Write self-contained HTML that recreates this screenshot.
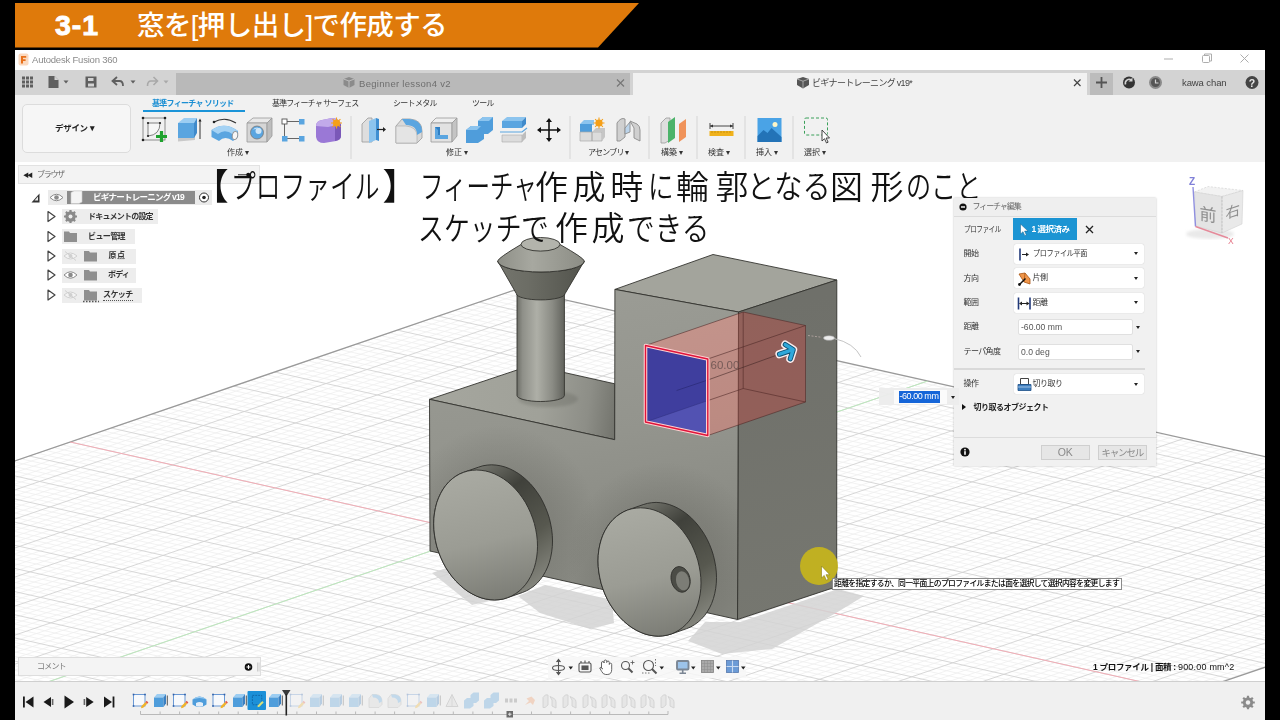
<!DOCTYPE html>
<html lang="ja"><head><meta charset="utf-8"><title>Fusion 360</title>
<style>
html,body{margin:0;padding:0;background:#000;}
body{width:1280px;height:720px;overflow:hidden;position:relative;font-family:"Liberation Sans","Noto Sans CJK JP",sans-serif;color:#222;}
.abs{position:absolute;}
#win{position:absolute;left:15px;top:50px;width:1250px;height:670px;background:#f0f0f0;overflow:hidden;filter:blur(0.5px);}
#titlebar{position:absolute;left:0;top:0;width:1250px;height:20px;background:#fff;}
#tabbar{position:absolute;left:0;top:19.5px;width:1250px;height:25.5px;background:#d3d3d3;}
#toolbar{position:absolute;left:0;top:45px;width:1250px;height:67px;background:#f1f1f1;}
#canvas{position:absolute;left:0;top:112px;width:1250px;height:519px;background:#fff;overflow:hidden;}
#timeline{position:absolute;left:0;top:631px;width:1250px;height:39px;background:#f0f0f0;border-top:1px solid #cfcfcf;}
.t{position:absolute;white-space:nowrap;line-height:1;}
.lbl{position:absolute;white-space:nowrap;line-height:1;font-size:8px;color:#333;}
</style></head>
<body>
<!-- top banner -->
<svg class="abs" style="left:0;top:0" width="1280" height="50" viewBox="0 0 1280 50">
<polygon points="15,3 639,3 598,47.5 15,47.5" fill="#df7a0b"/>
</svg>
<div class="t" style="left:55px;top:11px;font-size:28.5px;font-weight:bold;color:#fff;letter-spacing:1px;-webkit-text-stroke:0.9px #fff;">3-1</div>
<div class="t" style="left:137px;top:11.5px;font-size:27.5px;color:#fff;font-weight:500;letter-spacing:-0.6px;">窓を[押し出し]で作成する</div>

<div id="win">
<div id="titlebar">
<svg class="abs" style="left:3px;top:3px" width="12" height="14" viewBox="0 0 12 14"><rect x="0.5" y="0.5" width="10" height="12" rx="2" fill="#fbd9bf"/><path d="M3 10.5V3h5.2v1.8H5v1.5h2.6v1.7H5v2.5z" fill="#e8701a"/></svg>
<div class="t" style="left:17px;top:5px;font-size:9.5px;color:#8a8a8a;letter-spacing:-0.2px;">Autodesk Fusion 360</div>
<svg class="abs" style="left:1140px;top:0" width="110" height="20" viewBox="0 0 110 20" fill="none" stroke="#adadad" stroke-width="1">
<path d="M9 9h9"/><rect x="47.5" y="5.500" width="7" height="7" rx="1"/><path d="M49.500 5.500v-1.500h7v7h-2" /><path d="M85.500 4.500l8 8m0-8l-8 8"/></svg>
</div>
<div id="tabbar">
<div class="abs" style="left:161px;top:3px;width:454px;height:22px;background:#b9b9b9;"></div>
<div class="abs" style="left:618px;top:3px;width:454px;height:23px;background:#f1f1f1;"></div>
<div class="abs" style="left:1075px;top:3px;width:23px;height:22px;background:#bcbcbc;"></div>
</div>
<div id="toolbar"></div>
<!-- tab bar + toolbar text -->
<div class="t" style="left:344px;top:28.5px;font-size:9.5px;color:#6e6e6e;letter-spacing:0.300px;">Beginner lesson4 v2</div>
<div class="t" style="left:797px;top:28.5px;font-size:9px;color:#444;letter-spacing:-0.7px;">ビギナートレーニング v19*</div>
<div class="t" style="left:1167px;top:27.5px;font-size:9.5px;color:#444;letter-spacing:-0.1px;">kawa chan</div>
<div class="abs" style="left:7px;top:54px;width:107px;height:47px;border:1px solid #dcdcdc;border-radius:5px;background:#f6f6f6;"></div>
<div class="t" style="left:40px;top:74px;font-size:8.5px;font-weight:bold;color:#222;letter-spacing:-0.3px;">デザイン ▾</div>
<div class="t" style="left:137px;top:50px;font-size:8px;font-weight:bold;color:#1c8fd3;letter-spacing:-0.7px;">基準フィーチャ ソリッド</div>
<div class="abs" style="left:128px;top:60px;width:102px;height:2px;background:#1b94d8;"></div>
<div class="t" style="left:257px;top:50px;font-size:8px;color:#333;letter-spacing:-0.85px;">基準フィーチャ サーフェス</div>
<div class="t" style="left:378px;top:50px;font-size:8px;color:#333;letter-spacing:-0.7px;">シートメタル</div>
<div class="t" style="left:457px;top:50px;font-size:8px;color:#333;letter-spacing:-0.7px;">ツール</div>
<div class="lbl" style="left:212px;top:99px;">作成 ▾</div>
<div class="lbl" style="left:431px;top:99px;">修正 ▾</div>
<div class="lbl" style="left:573px;top:99px;letter-spacing:-0.8px;">アセンブリ ▾</div>
<div class="lbl" style="left:646px;top:99px;">構築 ▾</div>
<div class="lbl" style="left:693px;top:99px;">検査 ▾</div>
<div class="lbl" style="left:741px;top:99px;">挿入 ▾</div>
<div class="lbl" style="left:789px;top:99px;">選択 ▾</div>
<!-- chrome icons (page coordinates) -->
<svg class="abs" style="left:0;top:0" width="1250" height="115" viewBox="15 50 1250 115">
<!-- quick access -->
<g fill="#5f5f5f">
<rect x="22" y="76.500" width="3" height="3"/><rect x="26" y="76.500" width="3" height="3"/><rect x="30" y="76.500" width="3" height="3"/>
<rect x="22" y="80.500" width="3" height="3"/><rect x="26" y="80.500" width="3" height="3"/><rect x="30" y="80.500" width="3" height="3"/>
<rect x="22" y="84.500" width="3" height="3"/><rect x="26" y="84.500" width="3" height="3"/><rect x="30" y="84.500" width="3" height="3"/>
<path d="M48.500 76h6l4 4v8h-10z"/><path d="M54.500 76v4h4" fill="#d3d3d3"/>
<path d="M63.500 80.500h5l-2.500 3z"/>
<path d="M85.500 76.500h11v11h-11z M88 78h5.500v3h-5.500z M88 83.500h6v3h-6z" fill-rule="evenodd"/>
<path d="M130.500 80.500h5l-2.500 3z"/>
</g>
<path d="M117 77l-4.500 4 4.500 4M113 81h6.500q3.500 0 3.500 5" fill="none" stroke="#5f5f5f" stroke-width="1.800"/>
<path d="M153.500 77l4 4-4 4M157 81h-6q-3.500 0-3.500 5" fill="none" stroke="#a9a9a9" stroke-width="1.600"/>
<path d="M163.500 80.500h5l-2.500 3z" fill="#a9a9a9"/>
<!-- tab icons -->
<path d="M343.500 79l5.500-2 5.500 2v6l-5.500 3-5.500-3z" fill="#8b8b8b"/><path d="M343.500 79l5.500 2 5.500-2M349 81v7" stroke="#c9c9c9" stroke-width="0.800" fill="none"/>
<path d="M617 79.500l7 7m0-7l-7 7" stroke="#777" stroke-width="1.200"/>
<path d="M797 79l6-2 6 2v6l-6 3.500-6-3.500z" fill="#555"/><path d="M797 79l6 2.200 6-2.200M803 81.200v7" stroke="#bbb" stroke-width="0.800" fill="none"/>
<path d="M1074 79.500l6.500 6.500m0-6.500l-6.500 6.500" stroke="#444" stroke-width="1.200"/>
<path d="M1096 82.500h11M1101.500 77v11" stroke="#555" stroke-width="1.800"/>
<circle cx="1129" cy="82.500" r="6" fill="#333"/><path d="M1125.500 84.500a4 4 0 0 1 6-4.500" stroke="#d3d3d3" stroke-width="1.600" fill="none"/><path d="M1132.500 77.500v4h-4z" fill="#d3d3d3"/>
<circle cx="1155.500" cy="82.500" r="6.500" fill="#8a8a8a"/><circle cx="1155.500" cy="82.500" r="4.500" fill="#555"/><path d="M1155.500 79.500v3.500h3" stroke="#d3d3d3" stroke-width="1.200" fill="none"/>
<circle cx="1252" cy="82.500" r="6.500" fill="#444"/><text x="1252" y="86.500" font-size="10.500" font-weight="bold" fill="#e6e6e6" text-anchor="middle" font-family="Liberation Sans, sans-serif">?</text>
<!-- separators -->
<g stroke="#dadada" stroke-width="1.200"><path d="M351 116v43M570 116v43M649 116v43M697 116v43M745 116v43M793 116v43"/></g>

<!-- 1 sketch -->
<g>
<rect x="143" y="118" width="22" height="22" fill="none" stroke="#777" stroke-width="0.800"/>
<path d="M148 123h12q0 12-12 13z" fill="#f7f7f7" stroke="#666" stroke-width="0.800"/>
<g fill="#222"><circle cx="143" cy="118" r="1.300"/><circle cx="165" cy="118" r="1.300"/><circle cx="143" cy="140" r="1.300"/><circle cx="148" cy="123" r="1.100"/><circle cx="160" cy="123" r="1.100"/><circle cx="148" cy="136" r="1.100"/></g>
<path d="M156 136.500h11M161.500 131v11" stroke="#1fa22e" stroke-width="3.200"/>
</g>
<!-- 2 extrude -->
<g>
<path d="M178 137l17-1v4l-17 1.500z" fill="#c9c9c9"/>
<path d="M178 123l6-5h13l-3 5z" fill="#9ccdf2"/><path d="M178 123h16v15h-16z" fill="#5aa5e0"/><path d="M194 123l3-5v15l-3 5z" fill="#3f8acb"/>
<path d="M200 120v19" stroke="#333" stroke-width="1"/><path d="M198.500 121.500l1.500-3 1.500 3z" fill="#222"/>
</g>
<!-- 3 revolve -->
<g>
<path d="M214 122q11-6 22 1" fill="none" stroke="#333" stroke-width="1.100"/><circle cx="214" cy="122" r="1.300" fill="#222"/>
<path d="M211.500 130q13-9 26.500 1v6l-5 4q-8-6-14 0l-7.500-4z" fill="#5aa5e0"/>
<path d="M211.500 130q13-9 26.500 1l-5 3.500q-8-6-15-0.500z" fill="#a4d2f4"/>
<ellipse cx="235" cy="135.500" rx="2.800" ry="4.200" fill="#f6f6f6" stroke="#777" stroke-width="0.700" transform="rotate(12 235 135.500)"/>
</g>
<!-- 4 hole -->
<g>
<path d="M247 123l6-5h19l-5 5z" fill="#e9e9e9" stroke="#999" stroke-width="0.800"/><path d="M247 123h20v19h-20z" fill="#d6d6d6" stroke="#999" stroke-width="0.800"/><path d="M267 123l5-5v18l-5 6z" fill="#bdbdbd" stroke="#999" stroke-width="0.800"/>
<circle cx="257" cy="132.500" r="6.500" fill="#5aa5e0" stroke="#777" stroke-width="0.800"/><path d="M253 130a5 5 0 0 1 9 1a6 6 0 0 0-9-1z" fill="#d3e9f9"/><circle cx="258.500" cy="131" r="3" fill="#cfe6f8"/>
</g>
<!-- 5 pattern -->
<g>
<path d="M287 121.500h13M287 138.500h13M284.500 124v12" stroke="#666" stroke-width="1" fill="none"/>
<rect x="282" y="119" width="5" height="5" fill="#fff" stroke="#555" stroke-width="0.900"/>
<rect x="299" y="119" width="5.500" height="5.500" fill="#5aa5e0"/><rect x="282" y="136" width="5.500" height="5.500" fill="#5aa5e0"/><rect x="299" y="136" width="5.500" height="5.500" fill="#5aa5e0"/>
</g>
<!-- 6 form -->
<g>
<path d="M316 126q0-5 6-6l10-2q7 0 9 6v12q0 4-5 5l-12 2q-7 0-8-6z" fill="#9a78d6"/>
<path d="M316 126q0-5 6-6l10-2q7 0 9 6l-13 3z" fill="#c2aaea"/><path d="M335 141v-14l6-3v12q0 4-6 5z" fill="#7a58b8"/>
<circle cx="336.500" cy="123" r="3.600" fill="#f5a01a"/><path d="M336.500 117.500v11M331 123h11M332.600 119.100l7.800 7.800M340.400 119.100l-7.800 7.800" stroke="#f5a01a" stroke-width="1.100"/>
</g>
<!-- 7 press pull -->
<g>
<path d="M362 124l6-6h4v24h-10z" fill="#dedede" stroke="#9a9a9a" stroke-width="0.800"/>
<path d="M369 121l7-3v22l-7 3z" fill="#8cc4ee"/><path d="M376 118l3 1v22l-3-1z" fill="#3f8fd2"/>
<path d="M377 129.500h7" stroke="#222" stroke-width="1.200"/><path d="M383 127l3 2.500-3 2.500z" fill="#222"/>
</g>
<!-- 8 fillet -->
<g>
<path d="M396 126l6-7h8q12 1 12 12v7l-5 5h-21z" fill="#d9d9d9" stroke="#9a9a9a" stroke-width="0.800"/>
<path d="M402 119h7q13 1 13 13l-5 3q0-10-11-10z" fill="#5aa5e0"/><path d="M396 126h10q11 1 11 10v7h-21z" fill="#e4e4e4" stroke="#aaa" stroke-width="0.600"/>
</g>
<!-- 9 shell -->
<g>
<path d="M431 123l5-5h21l-5 5z" fill="#efefef" stroke="#999" stroke-width="0.800"/><path d="M431 123h21v19h-21z" fill="#e2e2e2" stroke="#999" stroke-width="0.800"/><path d="M452 123l5-5v18l-5 6z" fill="#c4c4c4" stroke="#999" stroke-width="0.800"/>
<path d="M435 127h5v8h8v4h-13z" fill="#5aa5e0"/><path d="M435 127h5v8h-2v-5z" fill="#2f7fc4"/>
</g>
<!-- 10 combine -->
<g>
<path d="M466 130l5-4h7v-5l5-4h10v13l-5 4h-4v5l-6 4h-12z" fill="#4f9ddb"/>
<path d="M466 130l5-4h10l-4 4zM478 121l5-4h10l-4 4z" fill="#8cc4ee"/>
</g>
<!-- 11 split -->
<g>
<path d="M502 121l5-4h19l-4 4z" fill="#8cc4ee"/><path d="M502 121h20v7h-20z" fill="#5aa5e0"/><path d="M522 121l4-4v7l-4 4z" fill="#3f8acb"/>
<path d="M500 132h22l5-4" stroke="#5aa5e0" stroke-width="1.200" fill="none"/>
<path d="M502 135h20v7h-20z" fill="#dcdcdc" stroke="#aaa" stroke-width="0.600"/><path d="M522 135l4-4v7l-4 4z" fill="#bdbdbd"/>
</g>
<!-- 12 move -->
<g stroke="#111" stroke-width="1.600" fill="#111"><path d="M549 121v18M540 130h18"/><path d="M546 122l3-4 3 4zM546 138l3 4 3-4zM541 127l-4 3 4 3zM557 127l4 3-4 3z" stroke="none"/></g>
<!-- 13 new component -->
<g>
<path d="M580 124l4-4h10v5z" fill="#8cc4ee"/><path d="M580 124h12v8h-12z" fill="#4f9ddb"/>
<path d="M580 132h12v9h-12zM592 132h10v9h-10z" fill="#dcdcdc" stroke="#aaa" stroke-width="0.700"/><path d="M592 132l4-4h9l-3 4zM602 132l3-4v9l-3 4z" fill="#c6c6c6"/>
<circle cx="599" cy="123" r="3.600" fill="#f5a01a"/><path d="M599 117.500v11M593.500 123h11M595.100 119.100l7.800 7.800M602.900 119.100l-7.800 7.800" stroke="#f5a01a" stroke-width="1.100"/>
</g>
<!-- 14 joint -->
<g fill="#d0d0d0" stroke="#8d8d8d" stroke-width="0.900">
<path d="M617 123q4-6 8-4v18l-5 4h-3z"/><path d="M630 121l7 3q3 2 3 6v11l-6-3v-10z"/><path d="M625 128l5-6v10l-5 2z" fill="#bcd4ea"/>
</g>
<!-- 15 construct -->
<g>
<path d="M661 123l5-5h4v22l-5 3h-4z" fill="#dedede" stroke="#9a9a9a" stroke-width="0.800"/>
<path d="M668 122l7-5v21l-7 5z" fill="#4cb36a"/><path d="M679 124l7-5v18l-7 5z" fill="#f0935a"/>
</g>
<!-- 16 inspect -->
<g>
<path d="M710 126h23M710 123v6M733 123v6" stroke="#333" stroke-width="0.900"/><path d="M713 124.500l-3 1.500 3 1.500zM730 124.500l3 1.500-3 1.500z" fill="#333"/>
<rect x="709.500" y="131" width="24" height="5" fill="#f0b21c"/><path d="M712 131v2M715 131v2M718 131v2M721 131v2M724 131v2M727 131v2M730 131v2" stroke="#b57d00" stroke-width="0.600"/>
</g>
<!-- 17 insert -->
<g>
<rect x="757.500" y="118" width="24" height="24" fill="#4aa3e6"/><path d="M757.500 136l6-6 4 3 4-5 10 9v5h-24z" fill="#2373b7"/><circle cx="775" cy="124.500" r="2.500" fill="#fdf6c8"/>
</g>
<!-- 18 select -->
<g>
<rect x="804.500" y="118" width="23" height="17" rx="1.500" fill="none" stroke="#3aa05a" stroke-width="1" stroke-dasharray="3 2"/>
<path d="M822 130v11l2.500-2.300 2 4.300 1.600-.8-2-4.200h3.400z" fill="#fff" stroke="#333" stroke-width="0.900"/>
</g>
</svg>
<div id="canvas">
<svg class="abs" style="left:0;top:0" width="1250" height="519" viewBox="15 162 1250 519">
<defs>
<clipPath id="gclip"><polygon points="-502.4,637.8 517.2,289.1 1637.1,539.9 617.5,888.7"/></clipPath>
<linearGradient id="cyl" x1="0" x2="1" y1="0" y2="0"><stop offset="0" stop-color="#6d6e67"/><stop offset="0.12" stop-color="#8f9089"/><stop offset="0.42" stop-color="#aeafa7"/><stop offset="0.75" stop-color="#8a8b84"/><stop offset="1" stop-color="#62635d"/></linearGradient>
<linearGradient id="coneL" x1="0" x2="1" y1="0" y2="0"><stop offset="0" stop-color="#74756d"/><stop offset="0.35" stop-color="#6c6d65"/><stop offset="1" stop-color="#52534c"/></linearGradient>
<linearGradient id="coneU" x1="0" x2="1" y1="0" y2="0"><stop offset="0" stop-color="#8e8f87"/><stop offset="0.4" stop-color="#a7a8a0"/><stop offset="1" stop-color="#8c8d85"/></linearGradient>
<linearGradient id="rim1" gradientUnits="userSpaceOnUse" x1="470" y1="465" x2="555" y2="580"><stop offset="0" stop-color="#7d7e76"/><stop offset="0.3" stop-color="#40413b"/><stop offset="0.65" stop-color="#57584f"/><stop offset="1" stop-color="#8c8d85"/></linearGradient>
<linearGradient id="rim2" gradientUnits="userSpaceOnUse" x1="634" y1="502" x2="719" y2="617"><stop offset="0" stop-color="#7d7e76"/><stop offset="0.3" stop-color="#40413b"/><stop offset="0.65" stop-color="#57584f"/><stop offset="1" stop-color="#8c8d85"/></linearGradient>
<linearGradient id="wf1" gradientUnits="userSpaceOnUse" x1="470" y1="470" x2="500" y2="600"><stop offset="0" stop-color="#a9aaa2"/><stop offset="0.55" stop-color="#9b9c94"/><stop offset="1" stop-color="#7c7d76"/></linearGradient>
<linearGradient id="wf2" gradientUnits="userSpaceOnUse" x1="634" y1="508" x2="664" y2="636"><stop offset="0" stop-color="#a9aaa2"/><stop offset="0.55" stop-color="#9b9c94"/><stop offset="1" stop-color="#7c7d76"/></linearGradient>
<linearGradient id="front" gradientUnits="userSpaceOnUse" x1="560" y1="290" x2="620" y2="620"><stop offset="0" stop-color="#9b9c95"/><stop offset="0.45" stop-color="#93948d"/><stop offset="1" stop-color="#83847d"/></linearGradient>
<linearGradient id="ltop" gradientUnits="userSpaceOnUse" x1="430" y1="395" x2="615" y2="420"><stop offset="0" stop-color="#a5a69e"/><stop offset="0.6" stop-color="#a0a199"/><stop offset="0.85" stop-color="#8d8e87"/><stop offset="1" stop-color="#74756e"/></linearGradient>
<linearGradient id="rightf" gradientUnits="userSpaceOnUse" x1="738" y1="312" x2="800" y2="620"><stop offset="0" stop-color="#6f706a"/><stop offset="1" stop-color="#767770"/></linearGradient>
<radialGradient id="ao1" gradientUnits="userSpaceOnUse" cx="500" cy="520" r="95"><stop offset="0.55" stop-color="#4a4a44" stop-opacity="0.18"/><stop offset="1" stop-color="#4a4a44" stop-opacity="0"/></radialGradient>
<radialGradient id="ao2" gradientUnits="userSpaceOnUse" cx="664" cy="557" r="95"><stop offset="0.55" stop-color="#4a4a44" stop-opacity="0.18"/><stop offset="1" stop-color="#4a4a44" stop-opacity="0"/></radialGradient>
<filter id="blur2"><feGaussianBlur stdDeviation="1.5"/></filter>
<filter id="blur1"><feGaussianBlur stdDeviation="0.7"/></filter>
</defs>
<g clip-path="url(#gclip)" fill="none">
<path d="M-492.1 640.1L527.5 291.4M-481.9 642.4L537.8 293.7M-471.6 644.7L548.0 296.0M-461.4 647.0L558.3 298.3M-440.8 651.6L578.8 302.9M-430.6 653.9L589.1 305.2M-420.3 656.2L599.3 307.5M-410.1 658.5L609.6 309.8M-389.5 663.1L630.1 314.3M-379.3 665.4L640.4 316.6M-369.0 667.7L650.6 318.9M-358.8 670.0L660.9 321.2M-338.2 674.6L681.4 325.8M-328.0 676.9L691.7 328.1M-317.7 679.2L701.9 330.4M-307.5 681.5L712.2 332.7M-286.9 686.1L732.7 337.3M-276.7 688.4L743.0 339.6M-266.4 690.7L753.2 341.9M-256.2 693.0L763.5 344.2M-235.6 697.6L784.0 348.8M-225.4 699.9L794.3 351.1M-215.1 702.2L804.5 353.4M-204.9 704.5L814.8 355.7M-184.3 709.1L835.3 360.3M-174.1 711.4L845.6 362.6M-163.8 713.7L855.8 364.9M-153.6 716.0L866.1 367.2M-133.0 720.6L886.6 371.8M-122.8 722.9L896.9 374.1M-112.5 725.2L907.1 376.4M-102.3 727.5L917.4 378.7M-81.7 732.1L937.9 383.3M-71.5 734.4L948.2 385.6M-61.2 736.7L958.4 387.9M-51.0 739.0L968.7 390.2M-30.4 743.5L989.2 394.8M-20.2 745.8L999.5 397.1M-9.9 748.1L1009.7 399.4M0.3 750.4L1020.0 401.7M20.9 755.0L1040.5 406.3M31.1 757.3L1050.8 408.6M41.4 759.6L1061.0 410.9M51.6 761.9L1071.3 413.2M72.2 766.5L1091.8 417.8M82.4 768.8L1102.1 420.1M92.7 771.1L1112.3 422.4M102.9 773.4L1122.6 424.7M123.5 778.0L1143.1 429.2M133.7 780.3L1153.4 431.5M144.0 782.6L1163.6 433.8M154.2 784.9L1173.9 436.1M174.8 789.5L1194.4 440.7M185.0 791.8L1204.7 443.0M195.3 794.1L1214.9 445.3M205.5 796.4L1225.2 447.6M226.1 801.0L1245.7 452.2M236.3 803.3L1256.0 454.5M246.6 805.6L1266.2 456.8M256.8 807.9L1276.5 459.1M277.4 812.5L1297.0 463.7M287.6 814.8L1307.3 466.0M297.9 817.1L1317.5 468.3M308.1 819.4L1327.8 470.6M328.7 824.0L1348.3 475.2M338.9 826.3L1358.6 477.5M349.2 828.6L1368.8 479.8M359.4 830.9L1379.1 482.1M380.0 835.5L1399.6 486.7M390.2 837.8L1409.9 489.0M400.5 840.1L1420.1 491.3M410.7 842.4L1430.4 493.6M431.3 847.0L1450.9 498.2M441.5 849.3L1461.2 500.5M451.8 851.6L1471.4 502.8M462.0 853.9L1481.7 505.1M482.6 858.4L1502.2 509.7M492.8 860.7L1512.5 512.0M503.1 863.0L1522.7 514.3M513.3 865.3L1533.0 516.6M533.9 869.9L1553.5 521.2M544.1 872.2L1563.8 523.5M554.4 874.5L1574.0 525.8M564.6 876.8L1584.3 528.1M585.2 881.4L1604.8 532.7M595.4 883.7L1615.1 535.0M605.7 886.0L1625.3 537.3M615.9 888.3L1635.6 539.6M-494.2 635.0L625.7 885.9M-486.0 632.2L633.8 883.1M-477.9 629.4L642.0 880.3M-469.7 626.6L650.2 877.5M-453.3 621.1L666.6 871.9M-445.1 618.3L674.7 869.1M-437.0 615.5L682.9 866.3M-428.8 612.7L691.1 863.5M-412.4 607.1L707.5 857.9M-404.2 604.3L715.6 855.1M-396.1 601.5L723.8 852.3M-387.9 598.7L732.0 849.5M-371.5 593.1L748.4 843.9M-363.3 590.3L756.5 841.1M-355.2 587.5L764.7 838.3M-347.0 584.7L772.9 835.5M-330.6 579.1L789.3 829.9M-322.4 576.3L797.4 827.1M-314.3 573.5L805.6 824.3M-306.1 570.7L813.8 821.5M-289.7 565.1L830.2 815.9M-281.5 562.3L838.3 813.1M-273.4 559.5L846.5 810.3M-265.2 556.7L854.7 807.5M-248.8 551.1L871.1 801.9M-240.6 548.3L879.2 799.1M-232.5 545.5L887.4 796.3M-224.3 542.7L895.6 793.5M-207.9 537.1L912.0 787.9M-199.7 534.3L920.1 785.1M-191.6 531.5L928.3 782.3M-183.4 528.7L936.5 779.5M-167.0 523.1L952.9 773.9M-158.8 520.3L961.0 771.2M-150.7 517.5L969.2 768.4M-142.5 514.7L977.4 765.6M-126.1 509.1L993.8 760.0M-117.9 506.3L1001.9 757.2M-109.8 503.5L1010.1 754.4M-101.6 500.7L1018.3 751.6M-85.2 495.1L1034.7 746.0M-77.0 492.3L1042.8 743.2M-68.9 489.5L1051.0 740.4M-60.7 486.7L1059.2 737.6M-44.3 481.2L1075.6 732.0M-36.1 478.4L1083.7 729.2M-28.0 475.6L1091.9 726.4M-19.8 472.8L1100.1 723.6M-3.4 467.2L1116.5 718.0M4.8 464.4L1124.6 715.2M12.9 461.6L1132.8 712.4M21.1 458.8L1141.0 709.6M37.5 453.2L1157.4 704.0M45.7 450.4L1165.5 701.2M53.8 447.6L1173.7 698.4M62.0 444.8L1181.9 695.6M78.4 439.2L1198.3 690.0M86.6 436.4L1206.4 687.2M94.7 433.6L1214.6 684.4M102.9 430.8L1222.8 681.6M119.3 425.2L1239.2 676.0M127.5 422.4L1247.3 673.2M135.6 419.6L1255.5 670.4M143.8 416.8L1263.7 667.6M160.2 411.2L1280.1 662.0M168.4 408.4L1288.2 659.2M176.5 405.6L1296.4 656.4M184.7 402.8L1304.6 653.6M201.1 397.2L1321.0 648.0M209.3 394.4L1329.1 645.2M217.4 391.6L1337.3 642.4M225.6 388.8L1345.5 639.6M242.0 383.2L1361.9 634.0M250.2 380.4L1370.0 631.3M258.3 377.6L1378.2 628.5M266.5 374.8L1386.4 625.7M282.9 369.2L1402.8 620.1M291.1 366.4L1410.9 617.3M299.2 363.6L1419.1 614.5M307.4 360.8L1427.3 611.7M323.8 355.2L1443.7 606.1M332.0 352.4L1451.8 603.3M340.1 349.6L1460.0 600.5M348.3 346.8L1468.2 597.7M364.7 341.3L1484.6 592.1M372.9 338.5L1492.7 589.3M381.0 335.7L1500.9 586.5M389.2 332.9L1509.1 583.7M405.6 327.3L1525.5 578.1M413.8 324.5L1533.6 575.3M421.9 321.7L1541.8 572.5M430.1 318.9L1550.0 569.7M446.5 313.3L1566.4 564.1M454.7 310.5L1574.5 561.3M462.8 307.7L1582.7 558.5M471.0 304.9L1590.9 555.7M487.4 299.3L1607.3 550.1M495.6 296.5L1615.4 547.3M503.7 293.7L1623.6 544.5M511.9 290.9L1631.8 541.7" stroke="#efefef" stroke-width="0.8"/>
<path d="M-502.4 637.8L517.2 289.1M-451.1 649.3L568.5 300.6M-399.8 660.8L619.8 312.0M-348.5 672.3L671.1 323.5M-297.2 683.8L722.4 335.0M-245.9 695.3L773.7 346.5M-194.6 706.8L825.0 358.0M-143.3 718.3L876.3 369.5M-92.0 729.8L927.6 381.0M-40.7 741.2L978.9 392.5M10.6 752.7L1030.2 404.0M61.9 764.2L1081.5 415.5M113.2 775.7L1132.8 426.9M164.5 787.2L1184.1 438.4M215.8 798.7L1235.4 449.9M267.1 810.2L1286.7 461.4M318.4 821.7L1338.0 472.9M369.7 833.2L1389.3 484.4M421.0 844.7L1440.6 495.9M472.3 856.1L1491.9 507.4M523.6 867.6L1543.2 518.9M574.9 879.1L1594.5 530.4M-502.4 637.8L617.5 888.7M-461.5 623.8L658.4 874.7M-420.6 609.9L699.3 860.7M-379.7 595.9L740.2 846.7M-338.8 581.9L781.1 832.7M-297.9 567.9L822.0 818.7M-257.0 553.9L862.9 804.7M-216.1 539.9L903.8 790.7M-175.2 525.9L944.7 776.7M-134.3 511.9L985.6 762.8M-93.4 497.9L1026.5 748.8M-52.5 483.9L1067.4 734.8M-11.6 470.0L1108.3 720.8M29.3 456.0L1149.2 706.8M70.2 442.0L1190.1 692.8M111.1 428.0L1231.0 678.8M152.0 414.0L1271.9 664.8M192.9 400.0L1312.8 650.8M233.8 386.0L1353.7 636.8M274.7 372.0L1394.6 622.9M315.6 358.0L1435.5 608.9M356.5 344.0L1476.4 594.9M397.4 330.1L1517.3 580.9M438.3 316.1L1558.2 566.9M479.2 302.1L1599.1 552.9" stroke="#d3d3d3" stroke-width="0.9"/>
</g>
<path d="M-502.4 637.8L517.2 289.1L1637.1 539.9L617.5 888.7" fill="none" stroke="#9a9a9a" stroke-width="1.3"/>
<path d="M70.2 442.0L1190.1 692.8" stroke="#f2adb6" stroke-width="1"/>
<path d="M-92.0 729.8L927.6 381.0" stroke="#bce8bc" stroke-width="1"/>
<g fill="#d4d4d4" filter="url(#blur1)" opacity="0.85">
<polygon points="432,573 452,566 502,598 472,605"/>
<polygon points="518,596 545,585 612,600 614,623 590,629 540,613"/>
<polygon points="688,641 705,622 740,622 838,589 864,596 836,613 772,649 722,654"/>
</g>
<g stroke="#33332f" stroke-width="0.9" stroke-linejoin="round">
<polygon points="429.5,399.3 614.7,439.7 614.7,383.8 531.4,365.2" fill="url(#ltop)"/>
<polygon points="614.9,289.4 713,254.5 836.8,280 738.5,312" fill="#a3a49c"/>
<polygon points="738.5,312 836.8,280 836.7,586.7 737.5,619.5" fill="url(#rightf)"/>
<polygon points="429.5,399.3 614.7,439.7 614.9,289.4 738.5,312 737.5,619.5 430,551" fill="url(#front)"/>
</g>
<g clip-path="url(#fclip)">
</g>
<clipPath id="fclip"><polygon points="429.5,399.3 614.7,439.7 614.9,289.4 738.5,312 737.5,619.5 430,551"/></clipPath>
<g clip-path="url(#fclip)"><circle cx="500" cy="520" r="95" fill="url(#ao1)"/><circle cx="664" cy="557" r="95" fill="url(#ao2)"/></g>
<ellipse cx="548" cy="399" rx="30" ry="8" fill="#55564f" opacity="0.25" filter="url(#blur2)"/>
<g stroke="#33332f" stroke-width="0.9" stroke-linejoin="round">
<path d="M517,294 L517,395.5 A23.7,6 0 0 0 564.4,395.5 L564.4,294 Z" fill="url(#cyl)"/>
<path d="M497.7,261 A43.3,11 0 0 0 584.3,261 L565,293.7 A24.3,6.2 0 0 1 516.4,293.7 Z" fill="url(#coneL)"/>
<path d="M497.7,261 A43.3,11 0 0 0 584.3,261 Q584,258 560,244.5 L521,244.5 Q498,258 497.7,261 Z" fill="url(#coneU)"/>
<ellipse cx="540.5" cy="244.3" rx="19.5" ry="6.8" fill="#b3b4ac"/>
</g>
<polygon points="433.7,523.8 433.9,518.3 434.5,512.9 435.5,507.6 436.8,502.6 438.6,497.8 440.7,493.3 443.1,489.1 445.8,485.3 448.9,481.8 452.2,478.8 455.8,476.2 459.6,474.0 463.7,472.3 478.7,467.1 482.8,465.8 487.2,465.1 491.6,464.8 496.1,465.1 500.6,465.8 505.1,467.0 509.6,468.7 514.0,470.9 518.4,473.5 522.5,476.5 526.5,480.0 530.4,483.8 534.0,488.0 537.3,492.5 540.4,497.2 543.1,502.3 545.5,507.5 547.6,512.9 549.4,518.4 550.7,524.1 551.7,529.7 552.3,535.4 552.5,541.0 552.3,546.5 551.7,551.9 550.7,557.2 549.4,562.2 547.6,567.0 545.5,571.5 543.1,575.7 540.4,579.5 537.3,583.0 534.0,586.0 530.4,588.6 526.5,590.8 522.5,592.5 507.5,597.7 503.4,599.0 499.0,599.7 494.6,600.0 490.1,599.7 485.6,599.0 481.1,597.8 476.6,596.1 472.2,593.9 467.8,591.3 463.7,588.3 459.7,584.8 455.8,581.0 452.2,576.8 448.9,572.3 445.8,567.6 443.1,562.5 440.7,557.3 438.6,551.9 436.8,546.4 435.5,540.7 434.5,535.1 433.9,529.4" fill="url(#rim1)" stroke="#2e2e2a" stroke-width="0.9" stroke-linejoin="round"/>
<polygon points="537.5,546.2 537.3,551.7 536.7,557.1 535.7,562.4 534.4,567.4 532.6,572.2 530.5,576.7 528.1,580.9 525.4,584.7 522.3,588.2 519.0,591.2 515.4,593.8 511.6,596.0 507.5,597.7 503.4,599.0 499.0,599.7 494.6,600.0 490.1,599.7 485.6,599.0 481.1,597.8 476.6,596.1 472.2,593.9 467.8,591.3 463.7,588.3 459.7,584.8 455.8,581.0 452.2,576.8 448.9,572.3 445.8,567.6 443.1,562.5 440.7,557.3 438.6,551.9 436.8,546.4 435.5,540.7 434.5,535.1 433.9,529.4 433.7,523.8 433.9,518.3 434.5,512.9 435.5,507.6 436.8,502.6 438.6,497.8 440.7,493.3 443.1,489.1 445.8,485.3 448.9,481.8 452.2,478.8 455.8,476.2 459.6,474.0 463.7,472.3 467.8,471.0 472.2,470.3 476.6,470.0 481.1,470.3 485.6,471.0 490.1,472.2 494.6,473.9 499.0,476.1 503.4,478.7 507.5,481.7 511.6,485.2 515.4,489.0 519.0,493.2 522.3,497.7 525.4,502.4 528.1,507.5 530.5,512.7 532.6,518.1 534.4,523.6 535.7,529.3 536.7,534.9 537.3,540.6" fill="url(#wf1)" stroke="#2e2e2a" stroke-width="0.9" stroke-linejoin="round"/>

<polygon points="598.0,560.9 598.2,555.4 598.8,550.1 599.8,544.9 601.1,540.0 602.8,535.2 604.9,530.8 607.3,526.7 610.0,522.9 613.1,519.5 616.4,516.5 620.0,513.9 623.8,511.7 627.7,510.0 643.2,504.6 647.4,503.4 651.7,502.7 656.1,502.4 660.5,502.7 665.0,503.4 669.5,504.6 673.9,506.3 678.3,508.4 682.6,511.0 686.8,514.0 690.8,517.4 694.5,521.2 698.1,525.3 701.4,529.8 704.5,534.5 707.2,539.4 709.6,544.6 711.7,550.0 713.4,555.4 714.7,561.0 715.7,566.6 716.3,572.1 716.5,577.7 716.3,583.2 715.7,588.5 714.7,593.7 713.4,598.6 711.7,603.4 709.6,607.8 707.2,611.9 704.5,615.7 701.4,619.1 698.1,622.1 694.5,624.7 690.8,626.9 686.8,628.6 671.3,634.0 667.1,635.2 662.8,635.9 658.4,636.2 654.0,635.9 649.5,635.2 645.0,634.0 640.6,632.3 636.2,630.2 631.9,627.6 627.7,624.6 623.8,621.2 620.0,617.4 616.4,613.3 613.1,608.8 610.0,604.1 607.3,599.2 604.9,594.0 602.8,588.6 601.1,583.2 599.8,577.6 598.8,572.0 598.2,566.5" fill="url(#rim2)" stroke="#2e2e2a" stroke-width="0.9" stroke-linejoin="round"/>
<polygon points="701.0,583.1 700.8,588.6 700.2,593.9 699.2,599.1 697.9,604.0 696.2,608.8 694.1,613.2 691.7,617.3 689.0,621.1 685.9,624.5 682.6,627.5 679.0,630.1 675.2,632.3 671.3,634.0 667.1,635.2 662.8,635.9 658.4,636.2 654.0,635.9 649.5,635.2 645.0,634.0 640.6,632.3 636.2,630.2 631.9,627.6 627.7,624.6 623.8,621.2 620.0,617.4 616.4,613.3 613.1,608.8 610.0,604.1 607.3,599.2 604.9,594.0 602.8,588.6 601.1,583.2 599.8,577.6 598.8,572.0 598.2,566.5 598.0,560.9 598.2,555.4 598.8,550.1 599.8,544.9 601.1,540.0 602.8,535.2 604.9,530.8 607.3,526.7 610.0,522.9 613.1,519.5 616.4,516.5 620.0,513.9 623.8,511.7 627.7,510.0 631.9,508.8 636.2,508.1 640.6,507.8 645.0,508.1 649.5,508.8 654.0,510.0 658.4,511.7 662.8,513.8 667.1,516.4 671.3,519.4 675.2,522.8 679.0,526.6 682.6,530.7 685.9,535.2 689.0,539.9 691.7,544.8 694.1,550.0 696.2,555.4 697.9,560.8 699.2,566.4 700.2,572.0 700.8,577.5" fill="url(#wf2)" stroke="#2e2e2a" stroke-width="0.9" stroke-linejoin="round"/>

<polygon points="690.2,581.4 690.1,583.3 689.7,585.2 689.2,586.9 688.4,588.4 687.4,589.7 686.2,590.8 685.0,591.5 683.6,592.0 682.1,592.2 680.6,592.0 679.1,591.5 677.6,590.8 676.2,589.7 675.0,588.4 673.8,586.9 672.8,585.2 672.0,583.3 671.5,581.4 671.1,579.4 671.0,577.4 671.1,575.5 671.5,573.6 672.0,571.9 672.8,570.4 673.8,569.1 675.0,568.0 676.2,567.3 677.6,566.8 679.1,566.6 680.6,566.8 682.1,567.3 683.6,568.0 685.0,569.1 686.2,570.4 687.4,571.9 688.4,573.6 689.2,575.5 689.7,577.4 690.1,579.4" fill="#4b4c46" stroke="#2e2e2a" stroke-width="0.9"/>
<polygon points="689.2,582.2 689.1,583.7 688.9,585.0 688.5,586.3 687.9,587.5 687.3,588.4 686.5,589.2 685.6,589.8 684.6,590.2 683.6,590.3 682.6,590.2 681.6,589.9 680.6,589.3 679.6,588.5 678.7,587.6 677.9,586.5 677.3,585.2 676.7,583.8 676.3,582.4 676.1,580.9 676.0,579.4 676.1,577.9 676.3,576.6 676.7,575.3 677.3,574.1 677.9,573.2 678.7,572.4 679.6,571.8 680.6,571.4 681.6,571.3 682.6,571.4 683.6,571.7 684.6,572.3 685.6,573.1 686.5,574.0 687.3,575.1 687.9,576.4 688.5,577.8 688.9,579.2 689.1,580.7" fill="#7c7d76"/>
<!-- extrude preview -->
<clipPath id="exL"><rect x="600" y="300" width="138.200" height="160"/></clipPath>
<clipPath id="exR"><rect x="738.200" y="300" width="100" height="160"/></clipPath>
<g>
<g clip-path="url(#exL)">
<polygon points="645.5,345.5 743.2,312 805.5,325.5 707.800,359" fill="#ff8a80" fill-opacity="0.420"/>
<polygon points="707.800,359 805.5,325.5 805.5,402 707.800,435.5" fill="#fa7d74" fill-opacity="0.400"/>
</g>
<g clip-path="url(#exR)">
<polygon points="645.5,345.5 743.2,312 805.5,325.5 707.800,359" fill="#c84a44" fill-opacity="0.400"/>
<polygon points="707.800,359 805.5,325.5 805.5,402 707.800,435.5" fill="#c04640" fill-opacity="0.420"/>
</g>
<g stroke="#4e2624" stroke-width="0.800" stroke-opacity="0.700" fill="none">
<path d="M645.5,345.5L743.2,312L805.5,325.5L805.5,402L707.800,435.5M707.800,359L805.5,325.5M743.2,312V388.5L805.5,402M707.800,400.600L743.2,388.5"/>
<path d="M707.800,380L780,354" stroke="#3d2422"/>
</g>
<!-- window profile -->
<polygon points="645.5,345.5 707.800,359 707.800,435.5 645.5,422" fill="#3f3e9e"/>
<polygon points="645.5,422 707.800,400.600 707.800,435.5" fill="#5252b2"/>
<path d="M676.600,390.500L707.800,380" stroke="#2c2c7a" stroke-width="0.800"/>
<path d="M645.5,422L707.800,400.600" stroke="#2c2c7a" stroke-width="0.700" stroke-opacity="0.700"/>
<polygon points="645.5,345.5 707.800,359 707.800,435.5 645.5,422" fill="none" stroke="#ffd0d0" stroke-width="3.600" stroke-linejoin="round"/>
<polygon points="645.5,345.5 707.800,359 707.800,435.5 645.5,422" fill="none" stroke="#e0143a" stroke-width="1.400" stroke-linejoin="round"/>
<text x="710.500" y="369" font-size="11.500" fill="#5e4a48" fill-opacity="0.750" font-family="Liberation Sans, sans-serif">60.00</text>
<!-- rotation manipulator -->
<path d="M808,335.500 L822,337.300" stroke="#b9a9a6" stroke-width="0.800" stroke-dasharray="2 1.500"/>
<path d="M834,338.500 Q854,343 861,357" stroke="#bdbdbd" stroke-width="0.900" fill="none"/>
<ellipse cx="829" cy="338" rx="5.500" ry="2.300" fill="#ededed" stroke="#a5a5a5" stroke-width="0.600"/>
<!-- arrow manipulator -->
<g fill="none" stroke-linecap="round" stroke-linejoin="round">
<path d="M779.500,354.200L791.500,350.200M785.300,344.600L793.200,349.600L790.300,358.800" stroke="#fbeeee" stroke-width="8.200"/>
<path d="M779.500,354.200L791.500,350.200M785.300,344.600L793.200,349.600L790.300,358.800" stroke="#0f4f70" stroke-width="5.200"/>
<path d="M779.500,354.200L791.500,350.200M785.300,344.600L793.200,349.600L790.300,358.800" stroke="#2fa8da" stroke-width="3.400"/>
</g>
</g>
<!-- cursor highlight -->
<circle cx="819" cy="566" r="19" fill="#c6b51c" fill-opacity="0.930"/>
<path d="M821.500,566 v12 l2.700,-2.600 l2.200,4.800 l1.800,-0.900 l-2.200,-4.600 h3.800 z" fill="#fff" stroke="#8a7d10" stroke-width="0.600"/>
<!-- view cube -->
<g>
<ellipse cx="1210" cy="234" rx="24" ry="5" fill="#e9e9e9" filter="url(#blur2)"/>
<polygon points="1194.500,192 1208,186.500 1243,190.500 1222,196.500" fill="#f2f2f2" stroke="#cfcfcf" stroke-width="0.600" stroke-dasharray="2 1.500"/>
<polygon points="1194.500,192 1222,196.500 1222,233 1195.500,226" fill="#e4e4e4" stroke="#d2d2d2" stroke-width="0.600"/>
<polygon points="1222,196.500 1243,190.500 1242,224 1222,233" fill="#e9e9e9" stroke="#d2d2d2" stroke-width="0.600"/>
<path d="M1222,196.500V233" stroke="#bdbdbd" stroke-width="0.700" stroke-dasharray="2 1.500"/>
<text x="1199.500" y="219.500" font-size="17" fill="#8f8f8f" font-family="Liberation Sans, Noto Sans CJK JP, sans-serif" transform="translate(1199.500 219.500) skewY(9) translate(-1199.500 -219.500)">前</text>
<text x="1225.500" y="219" font-size="14.500" fill="#8f8f8f" font-family="Liberation Sans, Noto Sans CJK JP, sans-serif" transform="translate(1225.500 219) skewY(-18) translate(-1225.500 -219)">右</text>
<path d="M1193,187 L1195.500,226.500" stroke="#8f8fe0" stroke-width="1.400"/>
<path d="M1195.500,226.500 L1228,238" stroke="#e58a9a" stroke-width="1.400"/>
<text x="1189" y="184.500" font-size="10" fill="#8080d8" font-weight="bold" font-family="Liberation Sans, sans-serif">Z</text>
<text x="1228" y="244" font-size="8.500" fill="#e57a8a" font-family="Liberation Sans, sans-serif">X</text>
</g>
</svg>
<!-- overlays in page coordinates -->
<div class="abs" id="ov" style="left:-15px;top:-162px;width:1280px;height:720px;">
<!-- browser panel -->
<div class="abs" style="left:18px;top:165px;width:242px;height:19px;background:#f3f3f3;border:1px solid #e2e2e2;box-sizing:border-box;"></div>
<div class="t" style="left:23px;top:171.5px;font-size:6px;color:#222;letter-spacing:-2px;">◀◀</div>
<div class="t" style="left:37px;top:171px;font-size:8px;color:#666;letter-spacing:-1.300px;">ブラウザ</div>
<div class="abs" style="left:47.5px;top:190px;width:164px;height:14.5px;background:#ebebeb;"></div>
<div class="abs" style="left:67px;top:190.5px;width:128px;height:13.5px;background:#8b8b8b;"></div>
<div class="t" style="left:93px;top:193px;font-size:8.5px;font-weight:bold;color:#fff;letter-spacing:-0.75px;">ビギナートレーニング v19</div>
<div class="abs" style="left:62px;top:209px;width:96px;height:15px;background:#ededed;"></div>
<div class="abs" style="left:62px;top:229px;width:73px;height:15px;background:#ededed;"></div>
<div class="abs" style="left:62px;top:248.5px;width:74px;height:15px;background:#ededed;"></div>
<div class="abs" style="left:62px;top:267.5px;width:74px;height:15px;background:#ededed;"></div>
<div class="abs" style="left:62px;top:287.5px;width:80px;height:15px;background:#ededed;"></div>
<div class="t" style="left:88px;top:212.5px;font-size:8px;color:#333;letter-spacing:-0.8px;font-weight:bold;">ドキュメントの設定</div>
<div class="t" style="left:88px;top:232.5px;font-size:8px;color:#333;letter-spacing:-0.6px;font-weight:bold;">ビュー管理</div>
<div class="t" style="left:108.5px;top:252px;font-size:8px;color:#333;letter-spacing:0.5px;font-weight:bold;">原点</div>
<div class="t" style="left:108px;top:271px;font-size:8px;color:#333;letter-spacing:-0.8px;font-weight:bold;">ボディ</div>
<div class="t" style="left:103px;top:291px;font-size:8px;color:#333;letter-spacing:-0.6px;font-weight:bold;border-bottom:1.5px dotted #555;padding-bottom:1px;">スケッチ</div>
<svg class="abs" style="left:0;top:0" width="280" height="320" viewBox="0 0 280 320">
<path d="M31.500 202.500h8v-9z" fill="#333"/><path d="M34.500 200.500h3.500v-4z" fill="#ebebeb"/>
<g fill="none" stroke="#444" stroke-width="1.200" stroke-linejoin="round"><path d="M48 211.500l7 5-7 5zM48 231.500l7 5-7 5zM48 251l7 5-7 5zM48 270l7 5-7 5zM48 290l7 5-7 5z"/></g>
<!-- eyes -->
<g id="eye1"><path d="M50 197.500q6.500-6.500 13 0q-6.500 6.500-13 0z" fill="#fff" stroke="#8a8a8a" stroke-width="1"/><circle cx="56.500" cy="197.500" r="2.300" fill="#8a8a8a"/></g>
<g><path d="M64 275q6.500-6.500 13 0q-6.500 6.500-13 0z" fill="#fff" stroke="#8a8a8a" stroke-width="1"/><circle cx="70.500" cy="275" r="2.300" fill="#8a8a8a"/></g>
<g opacity="0.350"><path d="M64 256q6.500-6 13 0q-6.500 6-13 0z" fill="#fff" stroke="#999" stroke-width="1"/><circle cx="70.500" cy="256" r="2" fill="#999"/><path d="M65 251.500l11 9" stroke="#999" stroke-width="1"/></g>
<g opacity="0.350"><path d="M64 295q6.500-6 13 0q-6.500 6-13 0z" fill="#fff" stroke="#999" stroke-width="1"/><circle cx="70.500" cy="295" r="2" fill="#999"/><path d="M65 290.500l11 9" stroke="#999" stroke-width="1"/></g>
<!-- doc icon -->
<path d="M71 192.500l3-1.500h8v11l-3 1.500h-8z" fill="#f4f4f4" stroke="#ccc" stroke-width="0.600"/>
<circle cx="248.300" cy="174.800" r="2.100" fill="#111"/><path d="M238 174.800h9" stroke="#111" stroke-width="0.900"/>
<!-- radio -->
<circle cx="204" cy="197.500" r="4.500" fill="#fff" stroke="#333" stroke-width="1"/><circle cx="204" cy="197.500" r="1.800" fill="#222"/>
<!-- gear -->
<g transform="translate(70.500 216.500)"><circle r="4" fill="none" stroke="#8a8a8a" stroke-width="2.400"/><g stroke="#8a8a8a" stroke-width="2.200"><path d="M0-6.500v13M-6.500 0h13M-4.600-4.600l9.200 9.200M4.600-4.600l-9.200 9.200"/></g><circle r="2" fill="#ededed"/></g>
<!-- folders -->
<g fill="#8f8f8f"><path d="M64 231.500h5l1 1.500h7v9h-13z"/><path d="M84 251h5l1 1.500h7v9h-13z"/><path d="M84 270h5l1 1.500h7v9h-13z"/><path d="M84 290h5l1 1.500h7v9h-13z"/></g>
<path d="M83 301.500h16" stroke="#555" stroke-width="1.500" stroke-dasharray="1.500 1.500"/>
</svg>
<!-- big caption text -->
<style>
.cap{position:absolute;white-space:nowrap;line-height:1;font-size:32px;font-weight:350;color:#111;transform-origin:0 0;font-family:"Liberation Sans","Noto Sans CJK JP",sans-serif;}
</style>
<div class="cap" id="c1" style="transform:scale(1.1,1.13);transform-origin:26px 15px;left:196.0px;top:171.0px;">【</div>
<div class="cap" id="c2" style="left:230.9px;top:171.0px;transform:scaleX(0.774);">プロファイル</div>
<div class="cap" id="c3" style="transform:scale(1.1,1.13);transform-origin:6px 15px;left:383.0px;top:171.0px;">】</div>
<div class="cap" id="c4" style="left:420.0px;top:171.0px;transform:scaleX(0.735);">フィーチャ</div>
<div class="cap" id="c5" style="font-size:33px;margin-top:-0.5px;transform:scaleX(0.9999);left:535.0px;top:171.0px;letter-spacing:4.6px;">作成時</div>
<div class="cap" id="c6" style="left:647.8px;top:171.0px;transform:scaleX(0.800);">に</div>
<div class="cap" id="c7" style="font-size:33px;margin-top:-0.5px;transform:scaleX(0.9999);left:676.0px;top:171.0px;letter-spacing:6.4px;">輪郭</div>
<div class="cap" id="c8" style="left:746.8px;top:171.0px;transform:scaleX(0.880);">となる</div>
<div class="cap" id="c9" style="font-size:33px;margin-top:-0.5px;transform:scaleX(0.9999);left:829.6px;top:171.0px;letter-spacing:7.4px;">図形</div>
<div class="cap" id="c10" style="left:905.6px;top:171.0px;transform:scaleX(0.784);">のこと</div>
<div class="cap" id="d1" style="left:417.8px;top:212.5px;transform:scaleX(0.810);">スケッチ</div>
<div class="cap" id="d2" style="left:521.4px;top:212.5px;transform:scaleX(0.870);">で</div>
<div class="cap" id="d3" style="font-size:33px;margin-top:-0.5px;transform:scaleX(0.9999);left:555.0px;top:212.5px;letter-spacing:3.6px;">作成</div>
<div class="cap" id="d4" style="left:627.4px;top:212.5px;transform:scaleX(0.864);">できる</div>

<!-- feature dialog -->
<style>
#dlg{position:absolute;left:953.5px;top:197.5px;width:202.500px;height:268px;background:#f1f1f1;box-shadow:0 0 2px rgba(0,0,0,0.25);}
#dlg .hd{position:absolute;left:0;top:0;width:202.500px;height:18.500px;background:#efefef;border-bottom:1px solid #dcdcdc;}
.dl{position:absolute;left:10px;white-space:nowrap;line-height:1;font-size:8px;color:#333;letter-spacing:-0.6px;}
.dd{position:absolute;left:60px;width:130.500px;height:20px;background:#fff;border-radius:2px;box-shadow:0 0 1px rgba(0,0,0,0.25);}
.dd .tx{position:absolute;left:19px;top:6px;font-size:8px;line-height:1;color:#333;white-space:nowrap;letter-spacing:-0.5px;}
.dd .ar{position:absolute;right:6px;top:8.500px;width:0;height:0;border-left:2.500px solid transparent;border-right:2.500px solid transparent;border-top:3.500px solid #222;}
.inp{position:absolute;left:64.500px;width:115px;height:16px;background:#fff;border:1px solid #e0e0e0;box-sizing:border-box;border-radius:2px;}
.inp span{position:absolute;left:2px;top:3px;font-size:8.600px;line-height:1;color:#555;white-space:nowrap;}
.ar2{position:absolute;left:182.500px;width:0;height:0;border-left:2.500px solid transparent;border-right:2.500px solid transparent;border-top:3.500px solid #222;}
.btn{position:absolute;top:247px;height:15px;box-sizing:border-box;border:1px solid #cfcfcf;background:#e6e6e6;font-size:10.500px;line-height:13px;text-align:center;color:#8a8a8a;white-space:nowrap;}
</style>
<div id="dlg">
<div class="hd"><svg class="abs" style="left:5px;top:5.500px" width="8" height="8" viewBox="0 0 8 8"><circle cx="4" cy="4" r="3.600" fill="#111"/><rect x="2" y="3.300" width="4" height="1.400" fill="#fff"/></svg>
<div class="t" style="left:19px;top:5.500px;font-size:8px;color:#666;letter-spacing:-1.100px;">フィーチャ編集</div></div>
<div class="dl" style="top:28px;transform:scaleX(0.830);transform-origin:0 0;">プロファイル</div>
<div class="abs" style="left:59.500px;top:20.500px;width:63.500px;height:22px;background:#1b94d3;"></div>
<svg class="abs" style="left:65px;top:25px" width="10" height="14" viewBox="0 0 10 14"><path d="M1.500 1v10l2.500-2.300 1.800 4 1.600-.7-1.800-3.900h3.400z" fill="#fff" stroke="#0d5f8c" stroke-width="0.500"/></svg>
<div class="t" style="left:78px;top:27.500px;font-size:8.500px;color:#fff;font-weight:bold;letter-spacing:-0.5px;">1 選択済み</div>
<svg class="abs" style="left:131px;top:27px" width="9" height="9" viewBox="0 0 9 9"><path d="M1 1l7 7m0-7l-7 7" stroke="#222" stroke-width="1.300"/></svg>
<div class="dl" style="top:52.500px;">開始</div>
<div class="dd" style="top:46px;"><svg class="abs" style="left:4px;top:4px" width="13" height="13" viewBox="0 0 13 13"><path d="M2 0.500v12" stroke="#223a7a" stroke-width="1.600"/><path d="M4 6.500h5" stroke="#222" stroke-width="1"/><path d="M8 4.500l3 2-3 2z" fill="#222"/></svg><div class="tx" style="transform:scaleX(0.900);transform-origin:0 0;">プロファイル平面</div><div class="ar"></div></div>
<div class="dl" style="top:77px;">方向</div>
<div class="dd" style="top:70.500px;"><svg class="abs" style="left:3px;top:3px" width="15" height="15" viewBox="0 0 15 15"><path d="M2 3l6-1 5 6v5l-6-2z" fill="#f0964a" stroke="#a85412" stroke-width="0.800"/><path d="M8 2l-1 9" stroke="#a85412" stroke-width="0.700"/><path d="M2.500 13.500l6-6" stroke="#111" stroke-width="1.400"/><circle cx="2.500" cy="13.500" r="1.400" fill="#111"/></svg><div class="tx">片側</div><div class="ar"></div></div>
<div class="dl" style="top:101.500px;">範囲</div>
<div class="dd" style="top:95px;"><svg class="abs" style="left:3px;top:4px" width="15" height="13" viewBox="0 0 15 13"><path d="M1.500 0.500v12M13 0.500v12" stroke="#223a7a" stroke-width="1.600"/><path d="M3 6.500h8" stroke="#222" stroke-width="1"/><path d="M5 4.500l-3 2 3 2zM9.500 4.500l3 2-3 2z" fill="#222"/></svg><div class="tx">距離</div><div class="ar"></div></div>
<div class="dl" style="top:125.500px;">距離</div>
<div class="inp" style="top:121.500px;"><span>-60.00 mm</span></div><div class="ar2" style="top:128px;"></div>
<div class="dl" style="top:150px;">テーパ角度</div>
<div class="inp" style="top:146px;"><span>0.0 deg</span></div><div class="ar2" style="top:152.500px;"></div>
<div class="abs" style="left:0;top:170.500px;width:191px;height:2px;background:#d9d9d9;"></div>
<div class="dl" style="top:182.500px;">操作</div>
<div class="dd" style="top:176.500px;"><svg class="abs" style="left:3px;top:3px" width="15" height="15" viewBox="0 0 15 15"><path d="M3.500 1.500h8v6h-8z" fill="#fff" stroke="#444" stroke-width="1"/><path d="M1 7.500h13v6h-13z" fill="#3f7fc0" stroke="#1d4f86" stroke-width="0.800"/><path d="M1 10h13" stroke="#bcd6ef" stroke-width="0.800"/></svg><div class="tx">切り取り</div><div class="ar"></div></div>
<div class="abs" style="left:8px;top:206.500px;width:0;height:0;border-top:3px solid transparent;border-bottom:3px solid transparent;border-left:4.500px solid #111;"></div>
<div class="t" style="left:20px;top:206px;font-size:8px;font-weight:bold;color:#222;letter-spacing:-0.500px;">切り取るオブジェクト</div>
<div class="abs" style="left:0;top:239.500px;width:203px;height:1px;background:#dcdcdc;"></div>
<svg class="abs" style="left:6.500px;top:249.500px" width="10" height="10" viewBox="0 0 10 10"><circle cx="5" cy="5" r="4.600" fill="#111"/><rect x="4.200" y="4.200" width="1.600" height="3.600" fill="#fff"/><circle cx="5" cy="2.700" r="0.900" fill="#fff"/></svg>
<div class="btn" style="left:87.500px;width:48.500px;">OK</div>
<div class="btn" style="left:144.500px;width:48.500px;letter-spacing:-1.200px;font-size:9.500px;">キャンセル</div>
</div>

<!-- floating value input -->
<div class="abs" style="left:879px;top:388px;width:80px;height:17px;background:#ececec;opacity:0.950;"></div>
<div class="abs" style="left:894px;top:390px;width:53px;height:13.500px;background:#fbfbfb;"></div>
<div class="abs" style="left:899px;top:391px;width:41px;height:11.500px;background:#1565d8;"></div>
<div class="t" style="left:899.500px;top:392.200px;font-size:9px;color:#fff;letter-spacing:-0.450px;">-60.00 mm</div>
<div class="abs" style="left:950.500px;top:396px;width:0;height:0;border-left:2.500px solid transparent;border-right:2.500px solid transparent;border-top:3.500px solid #222;"></div>

<!-- tooltip -->
<div class="abs" style="left:832px;top:577.500px;width:290px;height:12.500px;background:#fff;border:1px solid #8a8a8a;box-sizing:border-box;"></div>
<div class="t" id="tip" style="left:834px;top:580px;font-size:7.800px;color:#000;font-weight:500;letter-spacing:-0.660px;">距離を指定するか、同一平面上のプロファイルまたは面を選択して選択内容を変更します</div>

<!-- status -->
<div class="t" id="stat" style="left:1093px;top:663px;font-size:8.500px;color:#111;font-weight:bold;letter-spacing:-0.300px;">1 プロファイル | 面積 : <span style="font-weight:normal;letter-spacing:0.200px;font-size:9px;">900.00 mm^2</span></div>

<!-- comment bar -->
<div class="abs" style="left:18px;top:657px;width:243px;height:18.500px;background:#f4f4f4;border:1px solid #dedede;box-sizing:border-box;"></div>
<div class="t" style="left:37px;top:662.500px;font-size:8px;color:#777;letter-spacing:-0.800px;">コメント</div>
<svg class="abs" style="left:243px;top:661px" width="20" height="12" viewBox="0 0 20 12"><circle cx="5.500" cy="6" r="3.800" fill="#111"/><path d="M3.500 6h4M5.500 4v4" stroke="#fff" stroke-width="1.100"/><path d="M14.500 1.500v9M16 1.500v9" stroke="#c4c4c4" stroke-width="0.800"/></svg>

<!-- navigation bar -->
<div class="abs" style="left:548px;top:657px;width:198px;height:21px;background:rgba(247,247,247,0.850);"></div>
<svg class="abs" style="left:548px;top:655px" width="200" height="24" viewBox="548 655 200 24">
<g stroke="#555" fill="none" stroke-width="1.100">
<ellipse cx="558.500" cy="668" rx="6" ry="2.500"/><path d="M558.500 660v14"/><path d="M556.500 662l2-2.500 2 2.500M556.500 672l2 2.500 2-2.500" fill="#555"/>
<rect x="579" y="663" width="12" height="9" rx="1.500"/><rect x="582" y="666" width="6" height="3.500" fill="#555"/><path d="M581 663v-2M585 663v-2.500M589 663v-2"/>
<path d="M601.500 668v-5q0-1.500 1.300-1.500t1.300 1.500v-1.500q0-1.500 1.300-1.500t1.300 1.500v1q0-1.500 1.300-1.500t1.300 1.500v2q0-1.300 1.200-1.300t1.200 1.300v5q0 5-4.500 5h-1.500q-2.500 0-4-3l-2-3.500q1.500-1.500 3 1z" fill="#fff" stroke-width="0.900"/>
<circle cx="625.500" cy="665.500" r="4"/><path d="M628.500 668.500l4 4" stroke-width="2"/><path d="M632.500 660.500v4M630.500 662.500h4" stroke-width="0.800"/>
<circle cx="648.500" cy="665.500" r="5"/><path d="M652 669l4.500 4.500" stroke-width="2"/><path d="M642 673h9" stroke-dasharray="1.500 1.500" stroke-width="0.800"/><path d="M655.500 659v7" stroke-dasharray="1.500 1.500" stroke-width="0.800"/>
</g>
<g fill="#222"><path d="M568.500 666.500h4.500l-2.250 3zM659.500 666.500h4.500l-2.250 3zM691 666.500h4.500l-2.250 3zM716 666.500h4.500l-2.250 3zM741 666.500h4.500l-2.250 3z"/></g>
<rect x="677" y="661" width="11.500" height="8.500" rx="1" fill="#9cc3ea" stroke="#7b8694" stroke-width="1.900"/><path d="M682.700 670v2.500M679.500 673.300h6.500" stroke="#7b8694" stroke-width="1.600"/>
<rect x="701.500" y="660.500" width="12" height="12" fill="#a9a9a9" stroke="#808080" stroke-width="0.800"/><path d="M701.500 663.500h12M701.500 666.500h12M701.500 669.500h12M704.500 660.500v12M707.500 660.500v12M710.500 660.500v12" stroke="#8d8d8d" stroke-width="0.500"/>
<rect x="726.500" y="660.500" width="12" height="12" fill="#6c9bd6" stroke="#5578ad" stroke-width="0.800"/><path d="M726.500 666.500h12M732.500 660.500v12" stroke="#c9dbf2" stroke-width="1.100"/>
</svg>
</div><!-- /ov -->
</div><!-- /canvas -->
<div id="timeline">
<svg class="abs" style="left:0;top:0" width="1250" height="39" viewBox="15 682 1250 39">
<defs>
<g id="isk"><rect x="-6.500" y="-6" width="11.500" height="11.500" fill="#f7f9fc" stroke="#5b8fd0" stroke-width="0.900"/><g fill="#2f5fa8"><rect x="-7.300" y="-6.800" width="1.600" height="1.600"/><rect x="4.200" y="-6.800" width="1.600" height="1.600"/><rect x="-7.300" y="4.700" width="1.600" height="1.600"/></g><path d="M1.500 5.500l4-4 1.700 1.700-4 4-2.200 0.500z" fill="#f0b22a"/><path d="M5.500 1.500l1.200-1.200 1.700 1.700-1.200 1.200z" fill="#e2564a"/></g>
<g id="iex"><path d="M-6 -3l3-3.500h9l-2.500 3.500z" fill="#9ccdf2"/><path d="M-6 -3h9.500v9.500h-9.500z" fill="#4f9ddb"/><path d="M3.500 -3l2.500-3.500v9.500l-2.500 3.500z" fill="#3a80c2"/><path d="M7.300 -5v10" stroke="#444" stroke-width="0.900"/></g>
<g id="irv"><path d="M-7 -1q7-6 14 0v5q-7 5-14 0z" fill="#4f9ddb"/><path d="M-7 -1q7-6 14 0q-7-3-14 0z" fill="#9ccdf2"/><path d="M-3.500 2.500q3.500-2 7 0v3q-3.500 1.500-7 0z" fill="#e4eef8"/></g>
<g id="ifl"><path d="M-6 -2l3-4h4q6 0.500 6 7v3l-3 3h-10z" fill="#d9d9d9" stroke="#9a9a9a" stroke-width="0.700"/><path d="M-3 -6h4q6 0.500 6 7l-3 1.500q0-5.500-6-5.500z" fill="#5aa5e0"/></g>
<g id="icb"><path d="M-7 0l3-2.500h3.500v-3l3-2.500h5.500v8l-3 2.500h-2.500v3l-3.500 2.500h-6z" fill="#4f9ddb"/></g>
<g id="ijt" fill="#d0d0d0" stroke="#8d8d8d" stroke-width="0.900"><path d="M-6 -3q2.500-4 5-2.500v10l-3 2.500h-2z"/><path d="M1 -4l4 2q2 1 2 3.500v6l-4-2v-6z"/></g>
<g id="idr"><path d="M-6 6l6-12 6 12z" fill="#d6d6d6" stroke="#8d8d8d" stroke-width="0.900"/><path d="M0 -6v12" stroke="#8d8d8d" stroke-width="0.700"/></g>
</defs>
<g fill="#1a1a1a">
<rect x="23" y="696.500" width="1.800" height="11"/><path d="M33.500 696.500v11l-8-5.500z"/>
<path d="M51 697v10l-7.500-5z"/><rect x="51.800" y="699" width="1.600" height="6" fill="#666"/>
<path d="M64.500 695.500v13l9.500-6.500z"/>
<path d="M86.200 697v10l7.500-5z"/><rect x="83.600" y="699" width="1.600" height="6" fill="#666"/>
<path d="M104 696.500v11l8-5.500z"/><rect x="112.600" y="696.500" width="1.800" height="11"/>
</g>
<path d="M140.500 711v3.500h527.500v-3.500" fill="none" stroke="#b9b9b9" stroke-width="1"/>
<path d="M160.1 711.500v3M179.6 711.500v3M199.2 711.500v3M218.7 711.500v3M238.2 711.500v3M257.8 711.500v3M277.4 711.500v3M296.9 711.500v3M316.5 711.500v3M336.0 711.500v3M355.6 711.500v3M375.1 711.500v3M394.6 711.500v3M414.2 711.500v3M433.8 711.500v3M453.3 711.500v3M472.9 711.500v3M492.4 711.500v3M511.9 711.500v3M531.5 711.500v3M551.0 711.500v3M570.6 711.500v3M590.2 711.500v3M609.7 711.500v3M629.2 711.500v3M648.8 711.500v3" stroke="#b9b9b9" stroke-width="1"/>
<use href="#isk" x="140.0" y="700.5"/>
<use href="#iex" x="160.0" y="700.5"/>
<use href="#isk" x="180.0" y="700.5"/>
<use href="#irv" x="199.5" y="700.5"/>
<use href="#isk" x="219.5" y="700.5"/>
<use href="#iex" x="239.0" y="700.5"/>
<rect x="247.500" y="691" width="18.500" height="19" rx="1" fill="#1c90d8"/>
<g transform="translate(257.500 700.500) scale(0.85)"><rect x="-6" y="-6" width="11" height="11" fill="none" stroke="#0d5f9c" stroke-width="0.900" stroke-dasharray="2.200 1.200"/><path d="M0.500 5.500l5-5 1.800 1.800-5 5-2.300 0.500z" fill="#d8e07a"/></g>
<use href="#iex" x="275" y="700.5"/>
<path d="M282 690h8.500l-3.500 5.500h-1.500z" fill="#3a3a3a"/><path d="M286.300 694v21.500" stroke="#222" stroke-width="1.600"/>
<g opacity="0.300">
<use href="#isk" x="297.0" y="700.5"/>
<use href="#iex" x="316.0" y="700.5"/>
<use href="#iex" x="336.0" y="700.5"/>
<use href="#iex" x="355.0" y="700.5"/>
<use href="#ifl" x="375.0" y="700.5"/>
<use href="#ifl" x="394.0" y="700.5"/>
<use href="#isk" x="414.0" y="700.5"/>
<use href="#iex" x="433.0" y="700.5"/>
<use href="#idr" x="452.0" y="700.5"/>
<use href="#icb" x="471.0" y="700.5"/>
<use href="#icb" x="491.0" y="700.5"/>
<g fill="#777"><rect x="505" y="698.500" width="3" height="4"/><rect x="509.500" y="698.500" width="3" height="4"/><rect x="514" y="698.500" width="3" height="4"/></g>
<path d="M525 705l4-4-2.500-2.500 5-2 3.500 3.500-2 5-2.500-2.500z" fill="#f0935a"/>
<use href="#ijt" x="549.0" y="700.5"/>
<use href="#ijt" x="569.0" y="700.5"/>
<use href="#ijt" x="589.0" y="700.5"/>
<use href="#ijt" x="608.0" y="700.5"/>
<use href="#ijt" x="628.0" y="700.5"/>
<use href="#ijt" x="647.0" y="700.5"/>
<use href="#ijt" x="667.0" y="700.5"/>
</g>
<rect x="506.500" y="711" width="6.500" height="6.500" fill="#6a6a6a"/><path d="M508 714.200h3.500M509.800 712.500v3.500" stroke="#eee" stroke-width="0.900"/>
<g transform="translate(1248 702.500)"><circle r="4" fill="none" stroke="#8a8a8a" stroke-width="2.300"/><g stroke="#8a8a8a" stroke-width="2.200"><path d="M0-6.800v13.600M-6.800 0h13.600M-4.800-4.800l9.600 9.600M4.800-4.800l-9.600 9.600"/></g><circle r="2.200" fill="#f0f0f0"/></g>
</svg>
</div>
</div><!-- /win -->
</body></html>
